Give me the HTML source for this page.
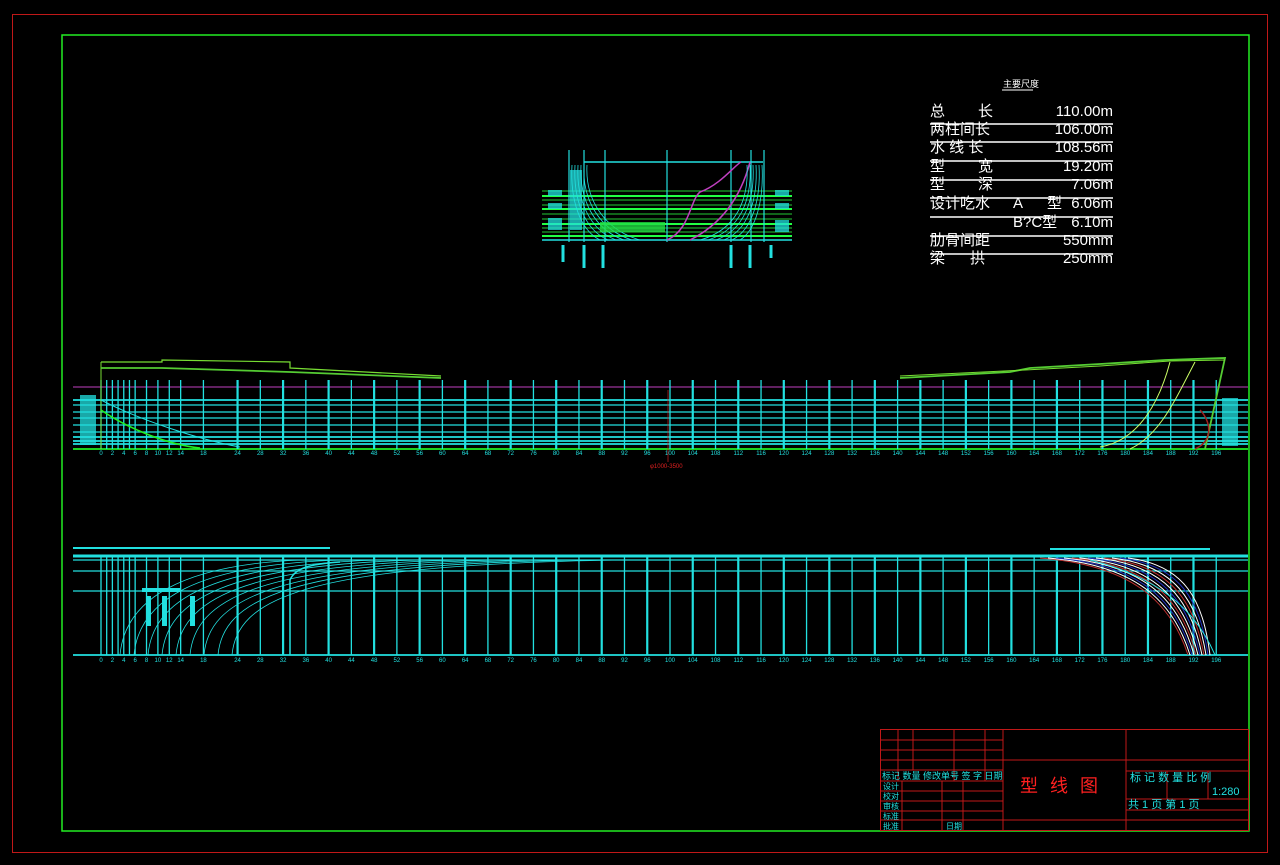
<!DOCTYPE html>
<html><head><meta charset="utf-8"><style>
html,body{margin:0;padding:0;background:#000;width:1280px;height:865px;overflow:hidden}
svg{display:block}
text{font-family:"Liberation Sans","Noto Sans CJK SC",sans-serif}
</style></head><body>
<svg id="s" width="1280" height="865" viewBox="0 0 1280 865" xmlns="http://www.w3.org/2000/svg">
<rect x="12.5" y="14.5" width="1255" height="838" fill="none" stroke="#c01818" stroke-width="1"/>
<rect x="62" y="35" width="1187" height="796" fill="none" stroke="#22ee22" stroke-width="1.5"/>

<g fill="#fff" font-size="15" stroke="none">
<text x="1003" y="87" font-size="9">主要尺度</text>
<line x1="1002" y1="90" x2="1033" y2="90" stroke="#fff"/>
<text x="930" y="116">总</text><text x="978" y="116">长</text><text x="1113" y="116" text-anchor="end">110.00m</text>
<text x="930" y="134">两柱间长</text><text x="1113" y="134" text-anchor="end">106.00m</text>
<text x="930" y="152">水 线 长</text><text x="1113" y="152" text-anchor="end">108.56m</text>
<text x="930" y="171">型</text><text x="978" y="171">宽</text><text x="1113" y="171" text-anchor="end">19.20m</text>
<text x="930" y="189">型</text><text x="978" y="189">深</text><text x="1113" y="189" text-anchor="end">7.06m</text>
<text x="930" y="208">设计吃水</text><text x="1013" y="208">A</text><text x="1047" y="208">型</text><text x="1113" y="208" text-anchor="end">6.06m</text>
<text x="1013" y="227">B?C型</text><text x="1113" y="227" text-anchor="end">6.10m</text>
<text x="930" y="245">肋骨间距</text><text x="1113" y="245" text-anchor="end">550mm</text>
<text x="930" y="263">梁</text><text x="970" y="263">拱</text><text x="1113" y="263" text-anchor="end">250mm</text>
</g>
<g stroke="#fff" stroke-width="1.5" id="ptl"></g>

<g id="body"></g>
<g id="prof"></g>
<g id="plan"></g>

<g stroke="#c01818" stroke-width="1" fill="none">
<rect x="880.5" y="729.5" width="368" height="101"/>
<line x1="1003" y1="729" x2="1003" y2="831"/>
<line x1="1126" y1="729" x2="1126" y2="831"/>
<line x1="1003" y1="760" x2="1249" y2="760"/>
<line x1="1003" y1="820" x2="1249" y2="820"/>
<line x1="880" y1="740" x2="1003" y2="740"/><line x1="880" y1="750" x2="1003" y2="750"/><line x1="880" y1="760" x2="1003" y2="760"/>
<line x1="880" y1="770" x2="1003" y2="770"/><line x1="880" y1="781" x2="1003" y2="781"/>
<line x1="880" y1="791" x2="1003" y2="791"/><line x1="880" y1="801" x2="1003" y2="801"/><line x1="880" y1="811" x2="1003" y2="811"/><line x1="880" y1="820" x2="1003" y2="820"/>
<line x1="898" y1="729" x2="898" y2="781"/><line x1="913" y1="729" x2="913" y2="770"/><line x1="954" y1="729" x2="954" y2="781"/><line x1="985" y1="729" x2="985" y2="781"/>
<line x1="902" y1="781" x2="902" y2="831"/><line x1="942" y1="781" x2="942" y2="831"/><line x1="963" y1="781" x2="963" y2="831"/>
<line x1="1126" y1="771" x2="1249" y2="771"/><line x1="1126" y1="799" x2="1249" y2="799"/><line x1="1126" y1="810" x2="1249" y2="810"/>
<line x1="1167" y1="771" x2="1167" y2="799"/><line x1="1208" y1="771" x2="1208" y2="799"/>
</g>
<g fill="#22e0e0" font-size="9">
<text x="882" y="779">标记 数量 修改单号 签 字 日期</text>
<text x="883" y="789" font-size="8">设计</text><text x="883" y="799" font-size="8">校对</text><text x="883" y="809" font-size="8">审核</text><text x="883" y="819" font-size="8">标准</text><text x="883" y="829" font-size="8">批准</text>
<text x="946" y="829" font-size="8">日期</text>
<text x="1130" y="781" font-size="11">标 记 数 量 比 例</text>
<text x="1212" y="795" font-size="11">1:280</text>
<text x="1128" y="808" font-size="11">共 1 页 第 1 页</text>
</g>
<text x="1020" y="792" fill="#ff2020" font-size="18" letter-spacing="12">型线图</text>
<text x="650" y="468" fill="#e02020" font-size="6">φ1000-3500</text>
</svg>
<script>
const NS="http://www.w3.org/2000/svg";
function L(g,x1,y1,x2,y2,c,w){const e=document.createElementNS(NS,'line');e.setAttribute('x1',x1);e.setAttribute('y1',y1);e.setAttribute('x2',x2);e.setAttribute('y2',y2);e.setAttribute('stroke',c);e.setAttribute('stroke-width',w||1);document.getElementById(g).appendChild(e);}
function P(g,d,c,w){const e=document.createElementNS(NS,'path');e.setAttribute('d',d);e.setAttribute('stroke',c);e.setAttribute('fill','none');e.setAttribute('stroke-width',w||1);document.getElementById(g).appendChild(e);}
function T(g,x,y,s,c,f){const e=document.createElementNS(NS,'text');e.setAttribute('x',x);e.setAttribute('y',y);e.setAttribute('fill',c);e.setAttribute('font-size',f||7);e.setAttribute('text-anchor','middle');e.textContent=s;document.getElementById(g).appendChild(e);}
function R(g,x,y,w,h,c,o){const e=document.createElementNS(NS,'rect');e.setAttribute('x',x);e.setAttribute('y',y);e.setAttribute('width',w);e.setAttribute('height',h);e.setAttribute('fill',c);e.setAttribute('opacity',o||1);document.getElementById(g).appendChild(e);}
[124,142,161,180,198,217,236,254].forEach(y=>L('ptl',930,y,1113,y,'#fff',1.5));
[191,196,200,205,209,214,219,224,228,232,236].forEach((y,i)=>L('body',542,y,792,y,i%3==1?'#22ff44':'#22cc33',i%3==1?2:1));
L('body',542,240,792,240,'#22e0e0',1.5);
[569,584,605,667,731,751,764].forEach(x=>L('body',x,150,x,242,'#22e0e0',1.2));
L('body',584,162,763,162,'#22e0e0',1.5);
P('body','M667 240 C690 230 690 200 700 192 C720 185 735 165 741 162','#c040c0',1.5);
P('body','M690 240 C720 225 740 200 750 162','#c040c0',1.5);
for(let k=0;k<6;k++){P('body',`M${572+k*3} 165 C${570+k*3} 200 ${580+k*5} 230 ${600+k*8} 240`,'#22e0e0',0.8);P('body',`M${762-k*3} 165 C${764-k*3} 200 ${756-k*4} 230 ${740-k*8} 240`,'#22e0e0',0.8);}
[[548,190,14,6],[548,203,14,6],[548,218,14,12],[775,190,14,6],[775,203,14,6],[775,220,14,12],[570,170,12,60]].forEach(r=>R('body',r[0],r[1],r[2],r[3],'#22e0e0',0.75));
R('body',600,222,65,10,'#22dd44',0.8);
[[563,245,262],[584,245,268],[603,245,268],[731,245,268],[750,245,268],[771,245,258]].forEach(a=>L('body',a[0],a[1],a[0],a[2],'#22e0e0',3));
L('prof',73,387,1248,387,'#c040c0',1);
[400,405,412,418,425,432,437,441,444].forEach((y,i)=>L('prof',73,y,1248,y,'#22e0e0',i==0||i>5?1.8:1.2));
L('prof',73,449,1248,449,'#22ee22',1.8);
const st=[0,1,2,3,4,5,6,8,10,12,14,18,24,28,32,36,40,44,48,52,56,60,64,68,72,76,80,84,88,92,96,100,104,108,112,116,120,124,128,132,136,140,144,148,152,156,160,164,168,172,176,180,184,188,192,196];
st.forEach((s)=>{const x=101+s*5.69;const thick=(s%8==0&&s>=20);L('prof',x,380,x,449,'#22e0e0',thick?2.2:1.3);L('plan',x,556,x,655,'#22e0e0',thick?2.2:1.3);if(s==0||s>=14||s%2==0){T('prof',x,455,s,'#22e0e0',6);T('plan',x,662,s,'#22e0e0',6);}});
P('prof','M101 362 L162 362 L162 360 L290 362 L290 368 L441 376','#77dd33',1.2);
P('prof','M101 362 L101 449','#77dd33',1);
P('prof','M101 368 L162 368 L290 372 L441 378','#55cc33',1.8);
P('prof','M900 378 L1010 372 L1030 368 L1100 364 L1165 360 L1225 358 L1205 449','#55cc33',1.8);
P('prof','M900 376 L1025 370 L1100 366 L1170 361 L1225 360','#77dd33',1);
P('prof','M1100 447 C1140 440 1160 400 1170 362','#ccff66',1);P('prof','M1130 449 C1160 435 1175 400 1195 362','#ccff66',1);
P('prof','M1200 410 C1210 420 1215 440 1195 449','#a02020',1.5);
P('prof','M101 400 C140 420 200 440 240 447','#22e0e0',1);P('prof','M101 410 C130 430 170 445 200 448','#22ee22',1.5);
R('prof',80,395,16,50,'#22e0e0',0.75);R('prof',1222,398,16,48,'#22e0e0',0.75);
L('prof',668,390,668,462,'#d02020',0.7);
L('plan',73,556,1248,556,'#22e0e0',3);L('plan',73,560,1248,560,'#22e0e0',1.2);L('plan',73,571,1248,571,'#22e0e0',1.2);L('plan',73,591,1248,591,'#22e0e0',1.2);L('plan',73,655,1248,655,'#22e0e0',1.8);
L('plan',73,548,330,548,'#22e0e0',2);
for(let k=0;k<9;k++){P('plan',`M${120+k*14} 655 C${125+k*14} 600 ${180+k*15} 565 ${300+k*40} 560`,'#22e0e0',0.8);}
P('plan','M290 655 L290 580 C295 568 310 564 340 562','#22e0e0',1.5);
for(let k=0;k<12;k++){P('plan',`M${1040+k*8} 558 C${1130+k*5} 565 ${1170+k*3} 600 ${1188+k*2} 655`,k%4==0?'#c03030':(k%4==2?'#2030c0':'#ffffff'),1);}
P('plan','M1090 560 C1170 580 1200 620 1215 655','#22e0e0',1);
L('plan',1050,549,1210,549,'#22e0e0',2);
[[142,588,38,4],[146,596,5,30],[162,596,5,30],[190,596,5,30]].forEach(r=>R('plan',r[0],r[1],r[2],r[3],'#22e0e0'));
</script>
</body></html>
